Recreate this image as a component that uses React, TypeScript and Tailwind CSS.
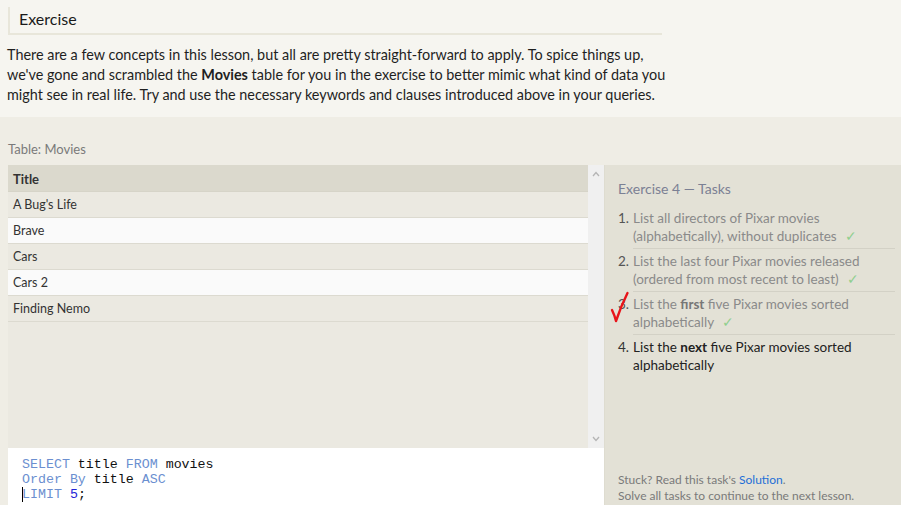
import React from 'react'

const sans = 'font-["Lato","Open_Sans",sans-serif]'

const rows = ["A Bug's Life", 'Brave', 'Cars', 'Cars 2', 'Finding Nemo']

function Check() {
  return <span className="ml-2 text-[#8fcf8f]">✓</span>
}

function RedCheck() {
  return (
    <svg className="absolute left-[-8px] top-[-4px]" width="20" height="32" viewBox="0 0 20 32">
      <path d="M2 19 C3.5 22 5 26 6 30 C9 21 13 11 17.5 2" fill="none" stroke="#e8141a" strokeWidth="2.4" strokeLinecap="round" strokeLinejoin="round" />
    </svg>
  )
}

export default function App() {
  return (
    <div className={`w-[901px] h-[505px] overflow-hidden bg-[#efede5] ${sans}`}>
      <div className="bg-[#f6f5f0] h-[117px] pt-[7px]">
        <div className="ml-[8px] w-[654px] h-[28px] border-l-2 border-b-2 border-[#e8e6da] pl-[9px] text-[16px] leading-[24px] text-[#1a1a1a]">
          Exercise
        </div>
        <p className="mt-[10px] ml-[7px] w-[680px] text-[14.4px] leading-[20px] text-[#1f1f1f]">
          There are a few concepts in this lesson, but all are pretty straight-forward to apply. To spice things up,
          <br />
          we've gone and scrambled the <b>Movies</b> table for you in the exercise to better mimic what kind of data you
          <br />
          might see in real life. Try and use the necessary keywords and clauses introduced above in your queries.
        </p>
      </div>

      <div className="pl-[8px] pt-[24px] h-[48px] text-[13px] leading-[16px] text-[#7a7a7a]">Table: Movies</div>

      <div className="flex h-[340px]">
        <div className="w-[596px] ml-[8px] flex flex-col">
          <div className="flex h-[283px]">
            <div className="flex-1 bg-[#ebe9e1]">
              <div className="h-[27px] bg-[#dbd9cd] border-b border-[#d6d4c8] px-[5px] pt-[1px] text-[13px] leading-[26px] font-bold text-[#333]">
                Title
              </div>
              {rows.map((r, i) => (
                <div
                  key={r}
                  className={`h-[26px] px-[5px] pt-[1px] text-[12.5px] leading-[24px] text-[#333] border-b border-[#dcdad0] ${i % 2 ? 'bg-[#fafafa]' : 'bg-[#ebe9e1]'}`}
                >
                  {r}
                </div>
              ))}
            </div>
            <div className="w-[16px] bg-[#f0f0f0] flex flex-col items-center justify-between py-[6px] text-[#b5b5b5]">
              <svg width="8" height="6" viewBox="0 0 8 6"><path d="M1 5 L4 1.5 L7 5" fill="none" stroke="currentColor" strokeWidth="1.3" /></svg>
              <svg width="8" height="6" viewBox="0 0 8 6"><path d="M1 1 L4 4.5 L7 1" fill="none" stroke="currentColor" strokeWidth="1.3" /></svg>
            </div>
          </div>
          <div className="flex-1 bg-white pl-[14px] pt-[9px] font-['Liberation_Mono','Courier_New',monospace] text-[13.3px] leading-[15px] text-[#111]">
            <div><span className="text-[#6b8fd0]">SELECT</span> title <span className="text-[#6b8fd0]">FROM</span> movies</div>
            <div><span className="text-[#6b8fd0]">Order By</span> title <span className="text-[#6b8fd0]">ASC</span></div>
            <div className="relative">
              <span className="absolute left-0 top-0 w-px h-[15px] bg-black" />
              <span className="text-[#6b8fd0]">LIMIT</span> <span className="text-[#2424d6]">5</span>;
            </div>
          </div>
        </div>

        <div className="flex-1 bg-[#e3e1d6] border-l border-[#dedcd0] pl-[13px] pr-[6px] pt-[15px] flex flex-col">
          <div className="text-[14px] leading-[18px] text-[#7b8094]">Exercise 4 — Tasks</div>
          <ol className="mt-[11px] text-[13.5px] leading-[18px]">
            <li className="flex">
              <span className="w-[15px] text-[#555]">1.</span>
              <div className="flex-1 text-[#8a8a8a] border-b border-[#d3d1c6] pb-[3px]">
                List all directors of Pixar movies (alphabetically), without duplicates<Check />
              </div>
            </li>
            <li className="flex mt-[3px]">
              <span className="w-[15px] text-[#555]">2.</span>
              <div className="flex-1 text-[#8a8a8a] border-b border-[#d3d1c6] pb-[3px]">
                List the last four Pixar movies released (ordered from most recent to least)<Check />
              </div>
            </li>
            <li className="flex mt-[3px]">
              <span className="relative w-[15px] text-[#555]">3.<RedCheck /></span>
              <div className="flex-1 text-[#8a8a8a] border-b border-[#d3d1c6] pb-[3px]">
                List the <b className="text-[#777]">first</b> five Pixar movies sorted alphabetically<Check />
              </div>
            </li>
            <li className="flex mt-[3px]">
              <span className="w-[15px] text-[#333]">4.</span>
              <div className="flex-1 text-[#222] pr-[20px]">
                List the <b>next</b> five Pixar movies sorted alphabetically
              </div>
            </li>
          </ol>
          <div className="mt-auto pb-[1px] text-[12px] leading-[16px] text-[#7a7a7a]">
            <div>Stuck? Read this task's <span className="text-[#1f6fd6]">Solution</span>.</div>
            <div>Solve all tasks to continue to the next lesson.</div>
          </div>
        </div>
      </div>
    </div>
  )
}
